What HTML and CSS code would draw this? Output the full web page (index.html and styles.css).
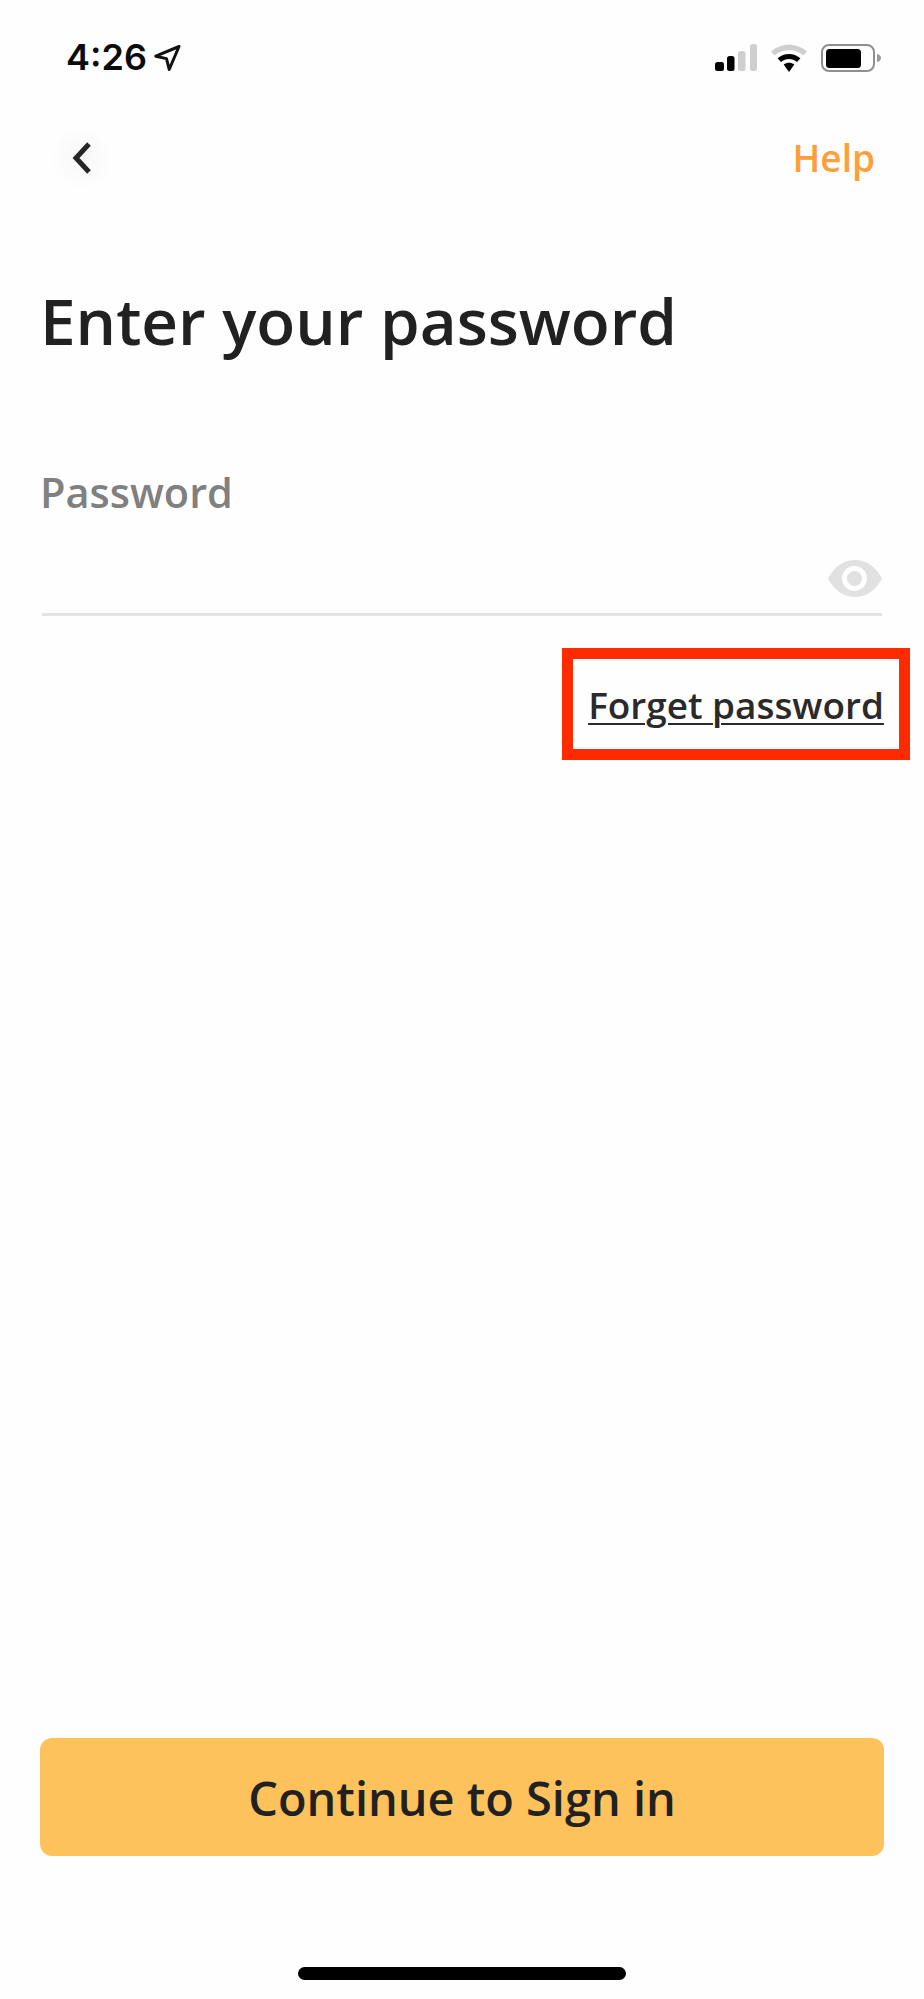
FILE: index.html
```html
<!DOCTYPE html>
<html lang="en">
<head>
<meta charset="utf-8">
<title>Enter your password</title>
<link rel="stylesheet" href="styles.css">
</head>
<body>
<main class="screen">
  <div class="status">
    <div class="status-left">
      <span class="time">4:26</span>
      <svg class="loc" width="27" height="26" viewBox="0 0 27 26"><path d="M25 1.500 1.800 11.200l10.700 2.400 2.700 10.900z" fill="none" stroke="#111" stroke-width="3" stroke-linejoin="round"/></svg>
    </div>
    <div class="status-right">
      <svg class="signal" width="42" height="28" viewBox="0 0 42 28"><rect x="0" y="18" width="9" height="9" rx="2.500" fill="#000"/><rect x="12" y="12" width="7.500" height="15" rx="2.500" fill="#000"/><rect x="23" y="7" width="7.500" height="20" rx="2.500" fill="#cfcfcf"/><rect x="35" y="0" width="7" height="27" rx="2.500" fill="#cfcfcf"/></svg>
      <svg class="wifi" width="38" height="29" viewBox="0 0 38 29"><path d="M1 8.500C11 -0.500 27 -0.500 37 8.500l-3.600 4C25.500 5.500 12.500 5.500 4.600 12.500z" fill="#cfcfcf"/><path d="M7.600 15.300c6.500-5.800 16.300-5.800 22.800 0l-3.400 3.700c-4.600-4-11.400-4-16 0z" fill="#000"/><path d="M13.700 21.600c3.100-2.600 7.500-2.600 10.600 0L19 29z" fill="#000"/></svg>
      <svg class="battery" width="60" height="28" viewBox="0 0 60 28"><rect x="1" y="1" width="52" height="26" rx="7" fill="none" stroke="#8f8f8f" stroke-width="2"/><rect x="5" y="5" width="35" height="19" rx="3.500" fill="#000"/><path d="M56 10c2.500.6 4 2 4 4s-1.500 3.400-4 4z" fill="#9a9a9a"/></svg>
    </div>
  </div>
  <nav class="nav">
    <span class="back">
      <svg width="20" height="34" viewBox="0 0 20 34"><path d="M17 3 4 17l13 14" fill="none" stroke="#262626" stroke-width="5"/></svg>
    </span>
    <a class="help">Help</a>
  </nav>
  <h1 class="title">Enter your password</h1>
  <label class="label">Password</label>
  <div class="field">
    <svg class="eye" width="54" height="37" viewBox="0 0 54 37"><path d="M0 18.500C6 7 15.500 0 27 0s21 7 27 18.500C48 30 38.500 37 27 37S6 30 0 18.500z" fill="#e1e1e1"/><circle cx="26.500" cy="18.500" r="12.500" fill="#fff"/><circle cx="26.500" cy="18.500" r="7.500" fill="#e1e1e1"/></svg>
  </div>
  <div class="forgot-row">
    <span class="highlight"><a class="forgot">Forget password</a></span>
  </div>
  <div class="spacer"></div>
  <button class="cta" type="button">Continue to Sign in</button>
  <div class="home"></div>
</main>
</body>
</html>
```
FILE: styles.css
```css
* { box-sizing: border-box; }
html, body { margin: 0; padding: 0; background: #fefefe; }
.screen {
  width: 924px;
  height: 1999px;
  display: flex;
  flex-direction: column;
  overflow: hidden;
  font-family: "Open Sans", "Liberation Sans", sans-serif;
  color: #222;
}
.status {
  height: 29px;
  margin-top: 43px;
  padding: 0 43px 0 66px;
  display: flex;
  justify-content: space-between;
  align-items: center;
}
.status-left { display: flex; align-items: center; gap: 7px; }
.time {
  font-family: Inter, "Liberation Sans", sans-serif;
  font-size: 36px;
  line-height: 29px;
  font-weight: 600;
  color: #0b0b0b;
}
.status-right { display: flex; align-items: center; }
.signal { margin-right: 13px; }
.wifi { margin-right: 13px; }
.nav {
  height: 64px;
  margin-top: 54px;
  padding: 0 49px 0 50px;
  display: flex;
  justify-content: space-between;
  align-items: center;
}
.back {
  width: 64px;
  height: 64px;
  border-radius: 50%;
  display: flex;
  align-items: center;
  justify-content: center;
  background: radial-gradient(circle closest-side, #f7f7f7 0%, #fbfbfb 60%, #fefefe 100%);
}
.help { font-size: 37px; line-height: 50px; font-weight: 600; color: #ff9f3a; }
.title {
  margin: 87px 0 0 40px;
  font-size: 63.800px;
  line-height: 88px;
  font-weight: 600;
  color: #212121;
}
.label {
  margin: 101px 0 0 40px;
  font-size: 41.500px;
  line-height: 52px;
  font-weight: 600;
  color: #808080;
}
.field {
  height: 98px;
  margin: 0 42px;
  border-bottom: 3px solid #e4e4e4;
  display: flex;
  justify-content: flex-end;
  align-items: flex-end;
  padding-bottom: 16px;
}
.forgot-row {
  margin-top: 32px;
  padding-right: 14px;
  display: flex;
  justify-content: flex-end;
}
.highlight {
  width: 348px;
  height: 112px;
  padding-top: 2px;
  border: 11px solid #ff2a00;
  display: flex;
  align-items: center;
  justify-content: center;
}
.forgot {
  font-size: 36.900px;
  line-height: 50px;
  font-weight: 600;
  color: #2a2a2a;
  text-decoration: underline;
  text-decoration-thickness: 2px;
  text-underline-offset: 4px;
}
.spacer { flex: 1; }
.cta {
  width: 844px;
  height: 118px;
  margin: 0 0 0 40px;
  padding: 2px 0 0;
  border: 0;
  border-radius: 12px;
  background: #fdc25c;
  font-family: inherit;
  font-size: 46.900px;
  font-weight: 600;
  color: #212121;
}
.home {
  width: 328px;
  height: 13px;
  margin: 111px 0 19px 298px;
  border-radius: 7px;
  background: #000;
}
```
